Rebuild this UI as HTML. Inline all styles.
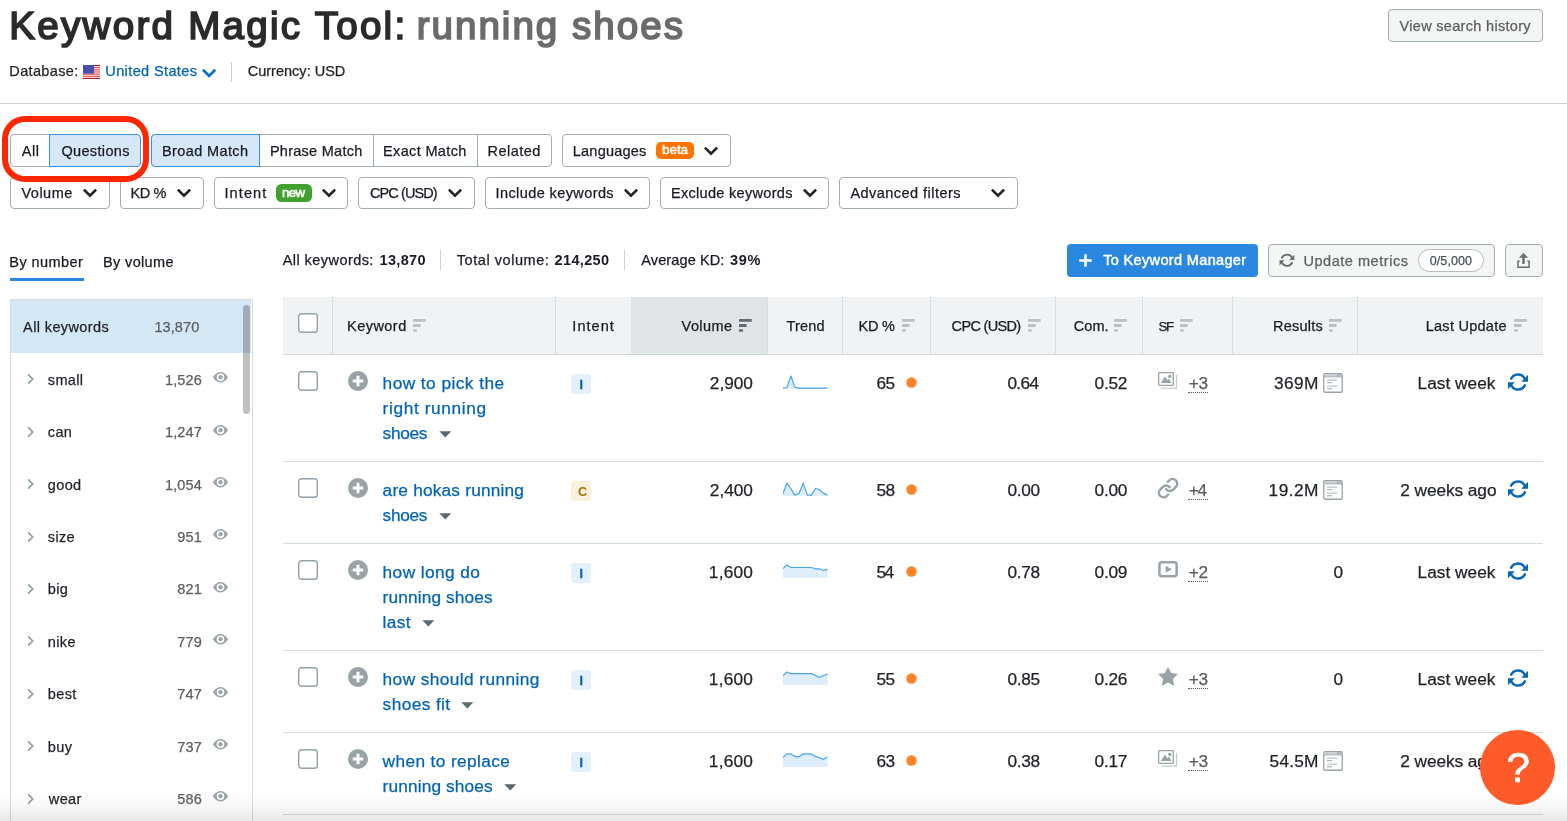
<!DOCTYPE html>
<html lang="en"><head><meta charset="utf-8"><title>Keyword Magic Tool: running shoes</title>
<style>
html,body{margin:0;padding:0;background:#fff;}
body{width:1567px;height:821px;overflow:hidden;position:relative;font-family:"Liberation Sans", sans-serif;}
.page{position:absolute;left:0;top:0;width:1567px;height:821px;overflow:hidden;will-change:transform;}
.b{position:absolute;box-sizing:border-box;display:block;}
.t{position:absolute;white-space:nowrap;line-height:20px;font-family:"Liberation Sans", sans-serif;}
</style></head><body>
<div class="page">
<div class="b" style="left:1388px;top:9px;width:155px;height:33px;background:#f4f5f5;border:1px solid #a1adb1;border-radius:4px;"></div>
<div class="b" style="left:231px;top:62px;width:1px;height:20px;background:#c9cdd0;"></div>
<svg class="b" style="left:83px;top:65px;" width="17" height="14" viewBox="0 0 17 14"><rect width="17" height="14" fill="#fbeaea"/><rect y="0.00" width="17" height="1.08" fill="#b01a1a"/><rect y="2.15" width="17" height="1.08" fill="#e0474d"/><rect y="4.31" width="17" height="1.08" fill="#e0474d"/><rect y="6.46" width="17" height="1.08" fill="#e0474d"/><rect y="8.62" width="17" height="1.08" fill="#e0474d"/><rect y="10.77" width="17" height="1.08" fill="#e0474d"/><rect y="12.92" width="17" height="1.08" fill="#b01a1a"/><rect width="11" height="8.7" fill="#4b50ae"/></svg>
<svg class="b" style="left:201px;top:66px;" width="17" height="13" viewBox="0 0 17 13"><path d="M1.95 3.75 L8.1 9.9 L14.25 3.75" fill="none" stroke="#0a6cc4" stroke-width="2.7" stroke-linecap="butt" stroke-linejoin="miter"/></svg>
<div class="b" style="left:0px;top:102.5px;width:1567px;height:1.0px;background:#cfd3d6;"></div>
<div class="b" style="left:10px;top:134px;width:40px;height:33px;background:#fff;border:1px solid #a1adb1;border-radius:4px 0 0 4px;"></div>
<div class="b" style="left:49px;top:134px;width:92px;height:33px;background:#d5e7f8;border:1px solid #3b8fe0;border-radius:0 4px 4px 0;"></div>
<div class="b" style="left:151px;top:134px;width:401px;height:33px;background:#fff;border:1px solid #a1adb1;border-radius:4px;"></div>
<div class="b" style="left:151px;top:134px;width:109px;height:33px;background:#d5e7f8;border:1px solid #3b8fe0;border-radius:4px 0 0 4px;"></div>
<div class="b" style="left:373px;top:135px;width:1px;height:31px;background:#a1adb1;"></div>
<div class="b" style="left:477px;top:135px;width:1px;height:31px;background:#a1adb1;"></div>
<div class="b" style="left:562px;top:134px;width:169px;height:33px;background:#fff;border:1px solid #a1adb1;border-radius:4px;"></div>
<div class="b" style="left:656px;top:142px;width:38px;height:17px;background:#ff7400;border-radius:5px;"></div>
<svg class="b" style="left:703.05px;top:145.1px;" width="16" height="12" viewBox="0 0 16 12"><path d="M1.9 2.6 L8 8.7 L14.1 2.6" fill="none" stroke="#222427" stroke-width="2.7" stroke-linecap="butt" stroke-linejoin="miter"/></svg>
<div class="b" style="left:10px;top:177px;width:100px;height:32px;background:#fff;border:1px solid #a1adb1;border-radius:4px;"></div>
<svg class="b" style="left:82.05px;top:187px;" width="16" height="12" viewBox="0 0 16 12"><path d="M1.9 2.6 L8 8.7 L14.1 2.6" fill="none" stroke="#222427" stroke-width="2.7" stroke-linecap="butt" stroke-linejoin="miter"/></svg>
<div class="b" style="left:120px;top:177px;width:84px;height:32px;background:#fff;border:1px solid #a1adb1;border-radius:4px;"></div>
<svg class="b" style="left:176.05px;top:187px;" width="16" height="12" viewBox="0 0 16 12"><path d="M1.9 2.6 L8 8.7 L14.1 2.6" fill="none" stroke="#222427" stroke-width="2.7" stroke-linecap="butt" stroke-linejoin="miter"/></svg>
<div class="b" style="left:214px;top:177px;width:134px;height:32px;background:#fff;border:1px solid #a1adb1;border-radius:4px;"></div>
<svg class="b" style="left:321.05px;top:187px;" width="16" height="12" viewBox="0 0 16 12"><path d="M1.9 2.6 L8 8.7 L14.1 2.6" fill="none" stroke="#222427" stroke-width="2.7" stroke-linecap="butt" stroke-linejoin="miter"/></svg>
<div class="b" style="left:358px;top:177px;width:117px;height:32px;background:#fff;border:1px solid #a1adb1;border-radius:4px;"></div>
<svg class="b" style="left:447.35px;top:187px;" width="16" height="12" viewBox="0 0 16 12"><path d="M1.9 2.6 L8 8.7 L14.1 2.6" fill="none" stroke="#222427" stroke-width="2.7" stroke-linecap="butt" stroke-linejoin="miter"/></svg>
<div class="b" style="left:485px;top:177px;width:165px;height:32px;background:#fff;border:1px solid #a1adb1;border-radius:4px;"></div>
<svg class="b" style="left:623.05px;top:187px;" width="16" height="12" viewBox="0 0 16 12"><path d="M1.9 2.6 L8 8.7 L14.1 2.6" fill="none" stroke="#222427" stroke-width="2.7" stroke-linecap="butt" stroke-linejoin="miter"/></svg>
<div class="b" style="left:660px;top:177px;width:169px;height:32px;background:#fff;border:1px solid #a1adb1;border-radius:4px;"></div>
<svg class="b" style="left:802.25px;top:187px;" width="16" height="12" viewBox="0 0 16 12"><path d="M1.9 2.6 L8 8.7 L14.1 2.6" fill="none" stroke="#222427" stroke-width="2.7" stroke-linecap="butt" stroke-linejoin="miter"/></svg>
<div class="b" style="left:839px;top:177px;width:179px;height:32px;background:#fff;border:1px solid #a1adb1;border-radius:4px;"></div>
<svg class="b" style="left:990.25px;top:187px;" width="16" height="12" viewBox="0 0 16 12"><path d="M1.9 2.6 L8 8.7 L14.1 2.6" fill="none" stroke="#222427" stroke-width="2.7" stroke-linecap="butt" stroke-linejoin="miter"/></svg>
<div class="b" style="left:276px;top:184px;width:36px;height:18px;background:#42a12e;border-radius:5.5px;"></div>
<div class="b" style="left:10px;top:278px;width:73.5px;height:2.6000000000000227px;background:#2a87e0;"></div>
<div class="b" style="left:440.2px;top:250px;width:1.0px;height:20px;background:#cfd3d6;"></div>
<div class="b" style="left:623.8px;top:250px;width:1.0px;height:20px;background:#cfd3d6;"></div>
<div class="b" style="left:1067px;top:244px;width:191px;height:33px;background:#2a87e0;border-radius:4px;"></div>
<svg class="b" style="left:1079px;top:253.5px;" width="13" height="13" viewBox="0 0 13 13"><path d="M6.5 0.3 V12.7 M0.3 6.5 H12.7" stroke="#fff" stroke-width="2.6" stroke-linecap="butt"/></svg>
<div class="b" style="left:1268px;top:244px;width:227px;height:33px;background:#f4f5f5;border:1px solid #a1adb1;border-radius:4px;"></div>
<div class="b" style="left:1418px;top:249px;width:66px;height:23px;background:#fff;border:1px solid #b4bdc0;border-radius:12px;"></div>
<div class="b" style="left:1505px;top:244px;width:38px;height:33px;background:#f4f5f5;border:1px solid #a1adb1;border-radius:4px;"></div>
<svg class="b" style="left:1277.56px;top:252.2px;" width="17.88" height="16.39" viewBox="-12 -11 24 22"><g><path d="M-6.8,-3.4 A7.6,7.6 0 0 1 6.5,-3.9" fill="none" stroke="#696c6e" stroke-width="2.45" stroke-linecap="round"/><path d="M10,-7.3 V-0.2 H3.2 Z" fill="#696c6e"/><g transform="rotate(180)"><path d="M-6.8,-3.4 A7.6,7.6 0 0 1 6.5,-3.9" fill="none" stroke="#696c6e" stroke-width="2.45" stroke-linecap="round"/><path d="M10,-7.3 V-0.2 H3.2 Z" fill="#696c6e"/></g></g></svg>
<svg class="b" style="left:1515px;top:251px;" width="17" height="19" viewBox="0 0 17 19"><path d="M8.5 1.9 L13.1 6.8 H9.7 V12.9 H7.3 V6.8 H3.9 Z" fill="#6b6d6e"/>
<path d="M4.6 10.2 H2.95 V16.15 H14.05 V10.2 H12.4" fill="none" stroke="#6b6d6e" stroke-width="1.5"/></svg>
<div class="b" style="left:10px;top:299px;width:243px;height:531px;background:#fff;border:1px solid #d3dee1;"></div>
<div class="b" style="left:11px;top:300px;width:240px;height:52.5px;background:#d4e7f7;"></div>
<div class="b" style="left:243px;top:305px;width:7px;height:109px;background:rgba(0,0,0,0.25);border-radius:3.5px;"></div>
<svg class="b" style="left:27px;top:373.4px;" width="8" height="12" viewBox="0 0 8 12"><path d="M1.1 1.3 L5.7 6 L1.1 10.7" fill="none" stroke="#909da1" stroke-width="1.7" stroke-linecap="butt" stroke-linejoin="miter"/></svg>
<svg class="b" style="left:212px;top:371.15px;" width="17" height="12.5" viewBox="0 0 17 12.5"><path d="M0.9 6.25 C3.4 2.4 5.9 1 8.5 1 C11.1 1 13.6 2.4 16.1 6.25 C13.6 10.1 11.1 11.5 8.5 11.5 C5.9 11.5 3.4 10.1 0.9 6.25 Z" fill="#9aa5a8"/><circle cx="8.5" cy="6.25" r="3.75" fill="#fff"/><circle cx="8.5" cy="6.25" r="2.15" fill="#9aa5a8"/></svg>
<svg class="b" style="left:27px;top:425.8px;" width="8" height="12" viewBox="0 0 8 12"><path d="M1.1 1.3 L5.7 6 L1.1 10.7" fill="none" stroke="#909da1" stroke-width="1.7" stroke-linecap="butt" stroke-linejoin="miter"/></svg>
<svg class="b" style="left:212px;top:423.55px;" width="17" height="12.5" viewBox="0 0 17 12.5"><path d="M0.9 6.25 C3.4 2.4 5.9 1 8.5 1 C11.1 1 13.6 2.4 16.1 6.25 C13.6 10.1 11.1 11.5 8.5 11.5 C5.9 11.5 3.4 10.1 0.9 6.25 Z" fill="#9aa5a8"/><circle cx="8.5" cy="6.25" r="3.75" fill="#fff"/><circle cx="8.5" cy="6.25" r="2.15" fill="#9aa5a8"/></svg>
<svg class="b" style="left:27px;top:478.2px;" width="8" height="12" viewBox="0 0 8 12"><path d="M1.1 1.3 L5.7 6 L1.1 10.7" fill="none" stroke="#909da1" stroke-width="1.7" stroke-linecap="butt" stroke-linejoin="miter"/></svg>
<svg class="b" style="left:212px;top:475.95px;" width="17" height="12.5" viewBox="0 0 17 12.5"><path d="M0.9 6.25 C3.4 2.4 5.9 1 8.5 1 C11.1 1 13.6 2.4 16.1 6.25 C13.6 10.1 11.1 11.5 8.5 11.5 C5.9 11.5 3.4 10.1 0.9 6.25 Z" fill="#9aa5a8"/><circle cx="8.5" cy="6.25" r="3.75" fill="#fff"/><circle cx="8.5" cy="6.25" r="2.15" fill="#9aa5a8"/></svg>
<svg class="b" style="left:27px;top:530.6px;" width="8" height="12" viewBox="0 0 8 12"><path d="M1.1 1.3 L5.7 6 L1.1 10.7" fill="none" stroke="#909da1" stroke-width="1.7" stroke-linecap="butt" stroke-linejoin="miter"/></svg>
<svg class="b" style="left:212px;top:528.35px;" width="17" height="12.5" viewBox="0 0 17 12.5"><path d="M0.9 6.25 C3.4 2.4 5.9 1 8.5 1 C11.1 1 13.6 2.4 16.1 6.25 C13.6 10.1 11.1 11.5 8.5 11.5 C5.9 11.5 3.4 10.1 0.9 6.25 Z" fill="#9aa5a8"/><circle cx="8.5" cy="6.25" r="3.75" fill="#fff"/><circle cx="8.5" cy="6.25" r="2.15" fill="#9aa5a8"/></svg>
<svg class="b" style="left:27px;top:583.0px;" width="8" height="12" viewBox="0 0 8 12"><path d="M1.1 1.3 L5.7 6 L1.1 10.7" fill="none" stroke="#909da1" stroke-width="1.7" stroke-linecap="butt" stroke-linejoin="miter"/></svg>
<svg class="b" style="left:212px;top:580.75px;" width="17" height="12.5" viewBox="0 0 17 12.5"><path d="M0.9 6.25 C3.4 2.4 5.9 1 8.5 1 C11.1 1 13.6 2.4 16.1 6.25 C13.6 10.1 11.1 11.5 8.5 11.5 C5.9 11.5 3.4 10.1 0.9 6.25 Z" fill="#9aa5a8"/><circle cx="8.5" cy="6.25" r="3.75" fill="#fff"/><circle cx="8.5" cy="6.25" r="2.15" fill="#9aa5a8"/></svg>
<svg class="b" style="left:27px;top:635.4px;" width="8" height="12" viewBox="0 0 8 12"><path d="M1.1 1.3 L5.7 6 L1.1 10.7" fill="none" stroke="#909da1" stroke-width="1.7" stroke-linecap="butt" stroke-linejoin="miter"/></svg>
<svg class="b" style="left:212px;top:633.15px;" width="17" height="12.5" viewBox="0 0 17 12.5"><path d="M0.9 6.25 C3.4 2.4 5.9 1 8.5 1 C11.1 1 13.6 2.4 16.1 6.25 C13.6 10.1 11.1 11.5 8.5 11.5 C5.9 11.5 3.4 10.1 0.9 6.25 Z" fill="#9aa5a8"/><circle cx="8.5" cy="6.25" r="3.75" fill="#fff"/><circle cx="8.5" cy="6.25" r="2.15" fill="#9aa5a8"/></svg>
<svg class="b" style="left:27px;top:687.8px;" width="8" height="12" viewBox="0 0 8 12"><path d="M1.1 1.3 L5.7 6 L1.1 10.7" fill="none" stroke="#909da1" stroke-width="1.7" stroke-linecap="butt" stroke-linejoin="miter"/></svg>
<svg class="b" style="left:212px;top:685.55px;" width="17" height="12.5" viewBox="0 0 17 12.5"><path d="M0.9 6.25 C3.4 2.4 5.9 1 8.5 1 C11.1 1 13.6 2.4 16.1 6.25 C13.6 10.1 11.1 11.5 8.5 11.5 C5.9 11.5 3.4 10.1 0.9 6.25 Z" fill="#9aa5a8"/><circle cx="8.5" cy="6.25" r="3.75" fill="#fff"/><circle cx="8.5" cy="6.25" r="2.15" fill="#9aa5a8"/></svg>
<svg class="b" style="left:27px;top:740.2px;" width="8" height="12" viewBox="0 0 8 12"><path d="M1.1 1.3 L5.7 6 L1.1 10.7" fill="none" stroke="#909da1" stroke-width="1.7" stroke-linecap="butt" stroke-linejoin="miter"/></svg>
<svg class="b" style="left:212px;top:737.95px;" width="17" height="12.5" viewBox="0 0 17 12.5"><path d="M0.9 6.25 C3.4 2.4 5.9 1 8.5 1 C11.1 1 13.6 2.4 16.1 6.25 C13.6 10.1 11.1 11.5 8.5 11.5 C5.9 11.5 3.4 10.1 0.9 6.25 Z" fill="#9aa5a8"/><circle cx="8.5" cy="6.25" r="3.75" fill="#fff"/><circle cx="8.5" cy="6.25" r="2.15" fill="#9aa5a8"/></svg>
<svg class="b" style="left:27px;top:792.6px;" width="8" height="12" viewBox="0 0 8 12"><path d="M1.1 1.3 L5.7 6 L1.1 10.7" fill="none" stroke="#909da1" stroke-width="1.7" stroke-linecap="butt" stroke-linejoin="miter"/></svg>
<svg class="b" style="left:212px;top:790.35px;" width="17" height="12.5" viewBox="0 0 17 12.5"><path d="M0.9 6.25 C3.4 2.4 5.9 1 8.5 1 C11.1 1 13.6 2.4 16.1 6.25 C13.6 10.1 11.1 11.5 8.5 11.5 C5.9 11.5 3.4 10.1 0.9 6.25 Z" fill="#9aa5a8"/><circle cx="8.5" cy="6.25" r="3.75" fill="#fff"/><circle cx="8.5" cy="6.25" r="2.15" fill="#9aa5a8"/></svg>
<div class="b" style="left:283px;top:297px;width:1260px;height:57px;background:#f0f2f3;"></div>
<div class="b" style="left:631px;top:297px;width:136.5px;height:57px;background:#e0e4e7;"></div>
<div class="b" style="left:283px;top:354px;width:1260px;height:1px;background:#cfd9dc;"></div>
<div class="b" style="left:332px;top:297px;width:1px;height:56.5px;background:#d9dee0;"></div>
<div class="b" style="left:555px;top:297px;width:1px;height:56.5px;background:#d9dee0;"></div>
<div class="b" style="left:767px;top:297px;width:1px;height:56.5px;background:#d9dee0;"></div>
<div class="b" style="left:842px;top:297px;width:1px;height:56.5px;background:#d9dee0;"></div>
<div class="b" style="left:930px;top:297px;width:1px;height:56.5px;background:#d9dee0;"></div>
<div class="b" style="left:1055px;top:297px;width:1px;height:56.5px;background:#d9dee0;"></div>
<div class="b" style="left:1142px;top:297px;width:1px;height:56.5px;background:#d9dee0;"></div>
<div class="b" style="left:1232px;top:297px;width:1px;height:56.5px;background:#d9dee0;"></div>
<div class="b" style="left:1357px;top:297px;width:1px;height:56.5px;background:#d9dee0;"></div>
<svg class="b" style="left:298px;top:313px;" width="20" height="20" viewBox="0 0 20 20"><rect x="0.7" y="0.7" width="18.6" height="18.6" rx="2.8" fill="#fff" stroke="#94a2a7" stroke-width="1.4"/></svg>
<svg class="b" style="left:412.5px;top:319px;" width="14" height="13" viewBox="0 0 14 13"><rect x="0" y="0.1" width="12.8" height="2.7" rx="0.5" fill="#b9c1c4"/><rect x="0" y="5.1" width="7.6" height="2.8" rx="0.5" fill="#b9c1c4"/><rect x="0" y="10.2" width="3.9" height="2.6" rx="0.5" fill="#b9c1c4"/></svg>
<svg class="b" style="left:738.7px;top:319px;" width="14" height="13" viewBox="0 0 14 13"><rect x="0" y="0.1" width="12.8" height="2.7" rx="0.5" fill="#5e6e74"/><rect x="0" y="5.1" width="7.6" height="2.8" rx="0.5" fill="#5e6e74"/><rect x="0" y="10.2" width="3.9" height="2.6" rx="0.5" fill="#5e6e74"/></svg>
<svg class="b" style="left:901.7px;top:319px;" width="14" height="13" viewBox="0 0 14 13"><rect x="0" y="0.1" width="12.8" height="2.7" rx="0.5" fill="#b9c1c4"/><rect x="0" y="5.1" width="7.6" height="2.8" rx="0.5" fill="#b9c1c4"/><rect x="0" y="10.2" width="3.9" height="2.6" rx="0.5" fill="#b9c1c4"/></svg>
<svg class="b" style="left:1027.7px;top:319px;" width="14" height="13" viewBox="0 0 14 13"><rect x="0" y="0.1" width="12.8" height="2.7" rx="0.5" fill="#b9c1c4"/><rect x="0" y="5.1" width="7.6" height="2.8" rx="0.5" fill="#b9c1c4"/><rect x="0" y="10.2" width="3.9" height="2.6" rx="0.5" fill="#b9c1c4"/></svg>
<svg class="b" style="left:1114px;top:319px;" width="14" height="13" viewBox="0 0 14 13"><rect x="0" y="0.1" width="12.8" height="2.7" rx="0.5" fill="#b9c1c4"/><rect x="0" y="5.1" width="7.6" height="2.8" rx="0.5" fill="#b9c1c4"/><rect x="0" y="10.2" width="3.9" height="2.6" rx="0.5" fill="#b9c1c4"/></svg>
<svg class="b" style="left:1180.2px;top:319px;" width="14" height="13" viewBox="0 0 14 13"><rect x="0" y="0.1" width="12.8" height="2.7" rx="0.5" fill="#b9c1c4"/><rect x="0" y="5.1" width="7.6" height="2.8" rx="0.5" fill="#b9c1c4"/><rect x="0" y="10.2" width="3.9" height="2.6" rx="0.5" fill="#b9c1c4"/></svg>
<svg class="b" style="left:1329px;top:319px;" width="14" height="13" viewBox="0 0 14 13"><rect x="0" y="0.1" width="12.8" height="2.7" rx="0.5" fill="#b9c1c4"/><rect x="0" y="5.1" width="7.6" height="2.8" rx="0.5" fill="#b9c1c4"/><rect x="0" y="10.2" width="3.9" height="2.6" rx="0.5" fill="#b9c1c4"/></svg>
<svg class="b" style="left:1513.9px;top:319px;" width="14" height="13" viewBox="0 0 14 13"><rect x="0" y="0.1" width="12.8" height="2.7" rx="0.5" fill="#b9c1c4"/><rect x="0" y="5.1" width="7.6" height="2.8" rx="0.5" fill="#b9c1c4"/><rect x="0" y="10.2" width="3.9" height="2.6" rx="0.5" fill="#b9c1c4"/></svg>
<div class="b" style="left:283px;top:460.7px;width:1260px;height:1.1999999999999886px;background:#d3dee1;"></div>
<svg class="b" style="left:298px;top:371px;" width="20" height="20" viewBox="0 0 20 20"><rect x="0.7" y="0.7" width="18.6" height="18.6" rx="2.8" fill="#fff" stroke="#94a2a7" stroke-width="1.4"/></svg>
<svg class="b" style="left:348px;top:371px;" width="20" height="20" viewBox="0 0 20 20"><circle cx="10" cy="10" r="10" fill="#98a3a6"/><path d="M10 4.8 V15.2 M4.8 10 H15.2" stroke="#fff" stroke-width="2.9" stroke-linecap="butt"/></svg>
<svg class="b" style="left:438.6px;top:430.8px;" width="13" height="7" viewBox="0 0 13 7"><path d="M0.3 0.2 H12.3 L6.3 6.6 Z" fill="#5b6a70"/></svg>
<div class="b" style="left:571px;top:374px;width:20px;height:20px;background:#e3f1fd;border-radius:3.5px;"></div>
<svg class="b" style="left:783.3px;top:374px;" width="46" height="16" viewBox="0 0 46 16"><polygon points="0,14.7 0,14.1 3.9,13.6 7.9,2.05 11.9,13.35 16,14.1 20.2,14.1 24.4,14.1 28.3,14.1 32.4,14.1 36.3,14.1 40.4,14.1 44.6,14.1 44.6,14.7" fill="#dcedfb"/><polyline points="0,14.1 3.9,13.6 7.9,2.05 11.9,13.35 16,14.1 20.2,14.1 24.4,14.1 28.3,14.1 32.4,14.1 36.3,14.1 40.4,14.1 44.6,14.1" fill="none" stroke="#47a4f0" stroke-width="1.2" stroke-linejoin="round"/></svg>
<svg class="b" style="left:905.5px;top:377px;" width="11" height="11" viewBox="0 0 11 11"><circle cx="5.5" cy="5.5" r="5.2" fill="#ff8427"/></svg>
<svg class="b" style="left:1157px;top:371px;" width="21" height="19" viewBox="0 0 21 19"><path d="M3.8 17.1 H19.5 V3.8" fill="none" stroke="#c6cdd0" stroke-width="1.3"/>
<rect x="1.65" y="1.65" width="14.7" height="12.7" rx="0.8" fill="#fff" stroke="#98a3a7" stroke-width="1.3"/>
<path d="M3.8 12 L8 5.6 L10.4 9.2 L12.1 7.6 L14.4 12 Z" fill="#98a3a7"/><circle cx="12.8" cy="5.4" r="1.7" fill="#98a3a7"/></svg>
<div class="b" style="left:1188px;top:392px;width:20px;height:0;border-top:1px dotted #555;"></div>
<svg class="b" style="left:1322.6px;top:372.6px;" width="21" height="21" viewBox="0 0 21 21"><rect x="0.75" y="0.75" width="18.5" height="18.5" rx="1.3" fill="#fff" stroke="#98a2a6" stroke-width="1.3"/>
<rect x="1.4" y="1.4" width="17.2" height="2.2" fill="#c9d0d2"/><path d="M1 3.9 H19" stroke="#98a2a6" stroke-width="0.9"/>
<rect x="14.3" y="1.3" width="1.2" height="2" fill="#98a2a6"/><rect x="16.6" y="1.3" width="1.2" height="2" fill="#98a2a6"/>
<rect x="4" y="6.3" width="10.2" height="1.7" fill="#c9d0d2"/><rect x="4" y="9.2" width="5" height="1" fill="#98a2a6"/>
<rect x="4" y="12.4" width="10.2" height="1.7" fill="#c9d0d2"/><rect x="4" y="15.3" width="5" height="1" fill="#98a2a6"/></svg>
<svg class="b" style="left:1506.0px;top:371.0px;" width="24.0" height="22.0" viewBox="-12 -11 24 22"><g><path d="M-6.8,-3.4 A7.6,7.6 0 0 1 6.5,-3.9" fill="none" stroke="#0866bd" stroke-width="2.45" stroke-linecap="round"/><path d="M10,-7.3 V-0.2 H3.2 Z" fill="#0866bd"/><g transform="rotate(180)"><path d="M-6.8,-3.4 A7.6,7.6 0 0 1 6.5,-3.9" fill="none" stroke="#0866bd" stroke-width="2.45" stroke-linecap="round"/><path d="M10,-7.3 V-0.2 H3.2 Z" fill="#0866bd"/></g></g></svg>
<div class="b" style="left:283px;top:542.7px;width:1260px;height:1.1999999999999318px;background:#d3dee1;"></div>
<svg class="b" style="left:298px;top:478px;" width="20" height="20" viewBox="0 0 20 20"><rect x="0.7" y="0.7" width="18.6" height="18.6" rx="2.8" fill="#fff" stroke="#94a2a7" stroke-width="1.4"/></svg>
<svg class="b" style="left:348px;top:478px;" width="20" height="20" viewBox="0 0 20 20"><circle cx="10" cy="10" r="10" fill="#98a3a6"/><path d="M10 4.8 V15.2 M4.8 10 H15.2" stroke="#fff" stroke-width="2.9" stroke-linecap="butt"/></svg>
<svg class="b" style="left:438.6px;top:512.8px;" width="13" height="7" viewBox="0 0 13 7"><path d="M0.3 0.2 H12.3 L6.3 6.6 Z" fill="#5b6a70"/></svg>
<div class="b" style="left:571px;top:481px;width:20px;height:20px;background:#faf0dc;border-radius:3.5px;"></div>
<svg class="b" style="left:783.3px;top:481px;" width="46" height="16" viewBox="0 0 46 16"><polygon points="0,14.7 0,12.9 3.9,1.9 7.9,7.75 11.9,14.1 16,12.4 20.2,2.15 24.4,14.1 28.3,14.1 32.4,7.5 36.3,8.5 40.4,12.1 44.6,14.1 44.6,14.7" fill="#dcedfb"/><polyline points="0,12.9 3.9,1.9 7.9,7.75 11.9,14.1 16,12.4 20.2,2.15 24.4,14.1 28.3,14.1 32.4,7.5 36.3,8.5 40.4,12.1 44.6,14.1" fill="none" stroke="#47a4f0" stroke-width="1.2" stroke-linejoin="round"/></svg>
<svg class="b" style="left:905.5px;top:484px;" width="11" height="11" viewBox="0 0 11 11"><circle cx="5.5" cy="5.5" r="5.2" fill="#ff8427"/></svg>
<svg class="b" style="left:1156px;top:475.7px;" width="24" height="24" viewBox="0 0 24 24"><g fill="none" stroke="#98a3a7" stroke-width="2.7" stroke-linecap="round" stroke-linejoin="round" transform="translate(12,12.2) scale(0.92) translate(-12,-12)">
<path d="M10 13a5 5 0 0 0 7.54.54l3-3a5 5 0 0 0-7.07-7.07l-1.72 1.71"/><path d="M14 11a5 5 0 0 0-7.54-.54l-3 3a5 5 0 0 0 7.07 7.07l1.71-1.71"/></g></svg>
<div class="b" style="left:1188px;top:499px;width:20px;height:0;border-top:1px dotted #555;"></div>
<svg class="b" style="left:1322.6px;top:479.6px;" width="21" height="21" viewBox="0 0 21 21"><rect x="0.75" y="0.75" width="18.5" height="18.5" rx="1.3" fill="#fff" stroke="#98a2a6" stroke-width="1.3"/>
<rect x="1.4" y="1.4" width="17.2" height="2.2" fill="#c9d0d2"/><path d="M1 3.9 H19" stroke="#98a2a6" stroke-width="0.9"/>
<rect x="14.3" y="1.3" width="1.2" height="2" fill="#98a2a6"/><rect x="16.6" y="1.3" width="1.2" height="2" fill="#98a2a6"/>
<rect x="4" y="6.3" width="10.2" height="1.7" fill="#c9d0d2"/><rect x="4" y="9.2" width="5" height="1" fill="#98a2a6"/>
<rect x="4" y="12.4" width="10.2" height="1.7" fill="#c9d0d2"/><rect x="4" y="15.3" width="5" height="1" fill="#98a2a6"/></svg>
<svg class="b" style="left:1506.0px;top:478.0px;" width="24.0" height="22.0" viewBox="-12 -11 24 22"><g><path d="M-6.8,-3.4 A7.6,7.6 0 0 1 6.5,-3.9" fill="none" stroke="#0866bd" stroke-width="2.45" stroke-linecap="round"/><path d="M10,-7.3 V-0.2 H3.2 Z" fill="#0866bd"/><g transform="rotate(180)"><path d="M-6.8,-3.4 A7.6,7.6 0 0 1 6.5,-3.9" fill="none" stroke="#0866bd" stroke-width="2.45" stroke-linecap="round"/><path d="M10,-7.3 V-0.2 H3.2 Z" fill="#0866bd"/></g></g></svg>
<div class="b" style="left:283px;top:649.7px;width:1260px;height:1.1999999999999318px;background:#d3dee1;"></div>
<svg class="b" style="left:298px;top:560px;" width="20" height="20" viewBox="0 0 20 20"><rect x="0.7" y="0.7" width="18.6" height="18.6" rx="2.8" fill="#fff" stroke="#94a2a7" stroke-width="1.4"/></svg>
<svg class="b" style="left:348px;top:560px;" width="20" height="20" viewBox="0 0 20 20"><circle cx="10" cy="10" r="10" fill="#98a3a6"/><path d="M10 4.8 V15.2 M4.8 10 H15.2" stroke="#fff" stroke-width="2.9" stroke-linecap="butt"/></svg>
<svg class="b" style="left:421.6px;top:619.8px;" width="13" height="7" viewBox="0 0 13 7"><path d="M0.3 0.2 H12.3 L6.3 6.6 Z" fill="#5b6a70"/></svg>
<div class="b" style="left:571px;top:563px;width:20px;height:20px;background:#e3f1fd;border-radius:3.5px;"></div>
<svg class="b" style="left:783.3px;top:563px;" width="46" height="16" viewBox="0 0 46 16"><polygon points="0,14.7 0,5.55 3.9,2.05 7.9,4.5 11.9,4.5 16,4.5 20.2,4.5 24.4,4.5 28.3,4.5 32.4,5.8 36.3,5.8 40.4,7.5 44.6,6.15 44.6,14.7" fill="#dcedfb"/><polyline points="0,5.55 3.9,2.05 7.9,4.5 11.9,4.5 16,4.5 20.2,4.5 24.4,4.5 28.3,4.5 32.4,5.8 36.3,5.8 40.4,7.5 44.6,6.15" fill="none" stroke="#47a4f0" stroke-width="1.2" stroke-linejoin="round"/></svg>
<svg class="b" style="left:905.5px;top:566px;" width="11" height="11" viewBox="0 0 11 11"><circle cx="5.5" cy="5.5" r="5.2" fill="#ff8427"/></svg>
<svg class="b" style="left:1157px;top:560px;" width="22" height="19" viewBox="0 0 22 19"><rect x="2.45" y="2.35" width="17.2" height="13.9" rx="2.4" fill="#fff" stroke="#98a3a7" stroke-width="2.5"/><path d="M8.6 5.9 L15.1 9.3 L8.6 12.7 Z" fill="#98a3a7"/></svg>
<div class="b" style="left:1188px;top:581px;width:20px;height:0;border-top:1px dotted #555;"></div>
<svg class="b" style="left:1506.0px;top:560.0px;" width="24.0" height="22.0" viewBox="-12 -11 24 22"><g><path d="M-6.8,-3.4 A7.6,7.6 0 0 1 6.5,-3.9" fill="none" stroke="#0866bd" stroke-width="2.45" stroke-linecap="round"/><path d="M10,-7.3 V-0.2 H3.2 Z" fill="#0866bd"/><g transform="rotate(180)"><path d="M-6.8,-3.4 A7.6,7.6 0 0 1 6.5,-3.9" fill="none" stroke="#0866bd" stroke-width="2.45" stroke-linecap="round"/><path d="M10,-7.3 V-0.2 H3.2 Z" fill="#0866bd"/></g></g></svg>
<div class="b" style="left:283px;top:731.7px;width:1260px;height:1.1999999999999318px;background:#d3dee1;"></div>
<svg class="b" style="left:298px;top:667px;" width="20" height="20" viewBox="0 0 20 20"><rect x="0.7" y="0.7" width="18.6" height="18.6" rx="2.8" fill="#fff" stroke="#94a2a7" stroke-width="1.4"/></svg>
<svg class="b" style="left:348px;top:667px;" width="20" height="20" viewBox="0 0 20 20"><circle cx="10" cy="10" r="10" fill="#98a3a6"/><path d="M10 4.8 V15.2 M4.8 10 H15.2" stroke="#fff" stroke-width="2.9" stroke-linecap="butt"/></svg>
<svg class="b" style="left:461.1px;top:701.8px;" width="13" height="7" viewBox="0 0 13 7"><path d="M0.3 0.2 H12.3 L6.3 6.6 Z" fill="#5b6a70"/></svg>
<div class="b" style="left:571px;top:670px;width:20px;height:20px;background:#e3f1fd;border-radius:3.5px;"></div>
<svg class="b" style="left:783.3px;top:670px;" width="46" height="16" viewBox="0 0 46 16"><polygon points="0,14.7 0,5.55 3.9,2.05 7.9,3.6 11.9,3.6 16,3.6 20.2,3.6 24.4,3.6 28.3,3.6 32.4,5.55 36.3,7.5 40.4,5.55 44.6,4.1 44.6,14.7" fill="#dcedfb"/><polyline points="0,5.55 3.9,2.05 7.9,3.6 11.9,3.6 16,3.6 20.2,3.6 24.4,3.6 28.3,3.6 32.4,5.55 36.3,7.5 40.4,5.55 44.6,4.1" fill="none" stroke="#47a4f0" stroke-width="1.2" stroke-linejoin="round"/></svg>
<svg class="b" style="left:905.5px;top:673px;" width="11" height="11" viewBox="0 0 11 11"><circle cx="5.5" cy="5.5" r="5.2" fill="#ff8427"/></svg>
<svg class="b" style="left:1157px;top:666px;" width="22" height="21" viewBox="0 0 22 21"><path d="M11 1 L14.1 7 L20.9 8 L16 12.9 L17.2 19.8 L11 16.6 L4.8 19.8 L6 12.9 L1.1 8 L7.9 7 Z" fill="#98a3a7"/></svg>
<div class="b" style="left:1188px;top:688px;width:20px;height:0;border-top:1px dotted #555;"></div>
<svg class="b" style="left:1506.0px;top:667.0px;" width="24.0" height="22.0" viewBox="-12 -11 24 22"><g><path d="M-6.8,-3.4 A7.6,7.6 0 0 1 6.5,-3.9" fill="none" stroke="#0866bd" stroke-width="2.45" stroke-linecap="round"/><path d="M10,-7.3 V-0.2 H3.2 Z" fill="#0866bd"/><g transform="rotate(180)"><path d="M-6.8,-3.4 A7.6,7.6 0 0 1 6.5,-3.9" fill="none" stroke="#0866bd" stroke-width="2.45" stroke-linecap="round"/><path d="M10,-7.3 V-0.2 H3.2 Z" fill="#0866bd"/></g></g></svg>
<div class="b" style="left:283px;top:813.7px;width:1260px;height:1.1999999999999318px;background:#d3dee1;"></div>
<svg class="b" style="left:298px;top:749px;" width="20" height="20" viewBox="0 0 20 20"><rect x="0.7" y="0.7" width="18.6" height="18.6" rx="2.8" fill="#fff" stroke="#94a2a7" stroke-width="1.4"/></svg>
<svg class="b" style="left:348px;top:749px;" width="20" height="20" viewBox="0 0 20 20"><circle cx="10" cy="10" r="10" fill="#98a3a6"/><path d="M10 4.8 V15.2 M4.8 10 H15.2" stroke="#fff" stroke-width="2.9" stroke-linecap="butt"/></svg>
<svg class="b" style="left:503.8px;top:783.8px;" width="13" height="7" viewBox="0 0 13 7"><path d="M0.3 0.2 H12.3 L6.3 6.6 Z" fill="#5b6a70"/></svg>
<div class="b" style="left:571px;top:752px;width:20px;height:20px;background:#e3f1fd;border-radius:3.5px;"></div>
<svg class="b" style="left:783.3px;top:752px;" width="46" height="16" viewBox="0 0 46 16"><polygon points="0,14.7 0,5.55 3.9,1.9 7.9,1.9 11.9,4.6 16,4.6 20.2,1.9 24.4,1.9 28.3,1.9 32.4,4.6 36.3,5.55 40.4,7.4 44.6,4.8 44.6,14.7" fill="#dcedfb"/><polyline points="0,5.55 3.9,1.9 7.9,1.9 11.9,4.6 16,4.6 20.2,1.9 24.4,1.9 28.3,1.9 32.4,4.6 36.3,5.55 40.4,7.4 44.6,4.8" fill="none" stroke="#47a4f0" stroke-width="1.2" stroke-linejoin="round"/></svg>
<svg class="b" style="left:905.5px;top:755px;" width="11" height="11" viewBox="0 0 11 11"><circle cx="5.5" cy="5.5" r="5.2" fill="#ff8427"/></svg>
<svg class="b" style="left:1157px;top:749px;" width="21" height="19" viewBox="0 0 21 19"><path d="M3.8 17.1 H19.5 V3.8" fill="none" stroke="#c6cdd0" stroke-width="1.3"/>
<rect x="1.65" y="1.65" width="14.7" height="12.7" rx="0.8" fill="#fff" stroke="#98a3a7" stroke-width="1.3"/>
<path d="M3.8 12 L8 5.6 L10.4 9.2 L12.1 7.6 L14.4 12 Z" fill="#98a3a7"/><circle cx="12.8" cy="5.4" r="1.7" fill="#98a3a7"/></svg>
<div class="b" style="left:1188px;top:770px;width:20px;height:0;border-top:1px dotted #555;"></div>
<svg class="b" style="left:1322.6px;top:750.6px;" width="21" height="21" viewBox="0 0 21 21"><rect x="0.75" y="0.75" width="18.5" height="18.5" rx="1.3" fill="#fff" stroke="#98a2a6" stroke-width="1.3"/>
<rect x="1.4" y="1.4" width="17.2" height="2.2" fill="#c9d0d2"/><path d="M1 3.9 H19" stroke="#98a2a6" stroke-width="0.9"/>
<rect x="14.3" y="1.3" width="1.2" height="2" fill="#98a2a6"/><rect x="16.6" y="1.3" width="1.2" height="2" fill="#98a2a6"/>
<rect x="4" y="6.3" width="10.2" height="1.7" fill="#c9d0d2"/><rect x="4" y="9.2" width="5" height="1" fill="#98a2a6"/>
<rect x="4" y="12.4" width="10.2" height="1.7" fill="#c9d0d2"/><rect x="4" y="15.3" width="5" height="1" fill="#98a2a6"/></svg>
<svg class="b" style="left:1506.0px;top:749.0px;" width="24.0" height="22.0" viewBox="-12 -11 24 22"><g><path d="M-6.8,-3.4 A7.6,7.6 0 0 1 6.5,-3.9" fill="none" stroke="#0866bd" stroke-width="2.45" stroke-linecap="round"/><path d="M10,-7.3 V-0.2 H3.2 Z" fill="#0866bd"/><g transform="rotate(180)"><path d="M-6.8,-3.4 A7.6,7.6 0 0 1 6.5,-3.9" fill="none" stroke="#0866bd" stroke-width="2.45" stroke-linecap="round"/><path d="M10,-7.3 V-0.2 H3.2 Z" fill="#0866bd"/></g></g></svg>
<span class="t" style="left:9.35px;top:16.10px;font-size:38.6px;color:#2b2b2b;letter-spacing:2.255px;-webkit-text-stroke:1.7px #2b2b2b;">Keyword Magic Tool:</span>
<span class="t" style="left:416.65px;top:16.10px;font-size:38.6px;color:#6b6b6b;letter-spacing:1.994px;-webkit-text-stroke:1.7px #6b6b6b;">running shoes</span>
<span class="t" style="left:1399.53px;top:16.00px;font-size:14.5px;color:#5c5e60;letter-spacing:0.314px;-webkit-text-stroke:0.25px #5c5e60;">View search history</span>
<span class="t" style="left:9.32px;top:60.80px;font-size:14.5px;color:#1f2226;letter-spacing:0.347px;-webkit-text-stroke:0.25px #1f2226;">Database:</span>
<span class="t" style="left:105.33px;top:60.80px;font-size:14.5px;color:#0062b8;letter-spacing:0.379px;-webkit-text-stroke:0.25px #0062b8;">United States</span>
<span class="t" style="left:247.72px;top:60.80px;font-size:14.5px;color:#1f2226;letter-spacing:0.011px;-webkit-text-stroke:0.25px #1f2226;">Currency: USD</span>
<span class="t" style="left:21.82px;top:140.60px;font-size:14.5px;color:#191b23;letter-spacing:0.479px;-webkit-text-stroke:0.25px #191b23;">All</span>
<span class="t" style="left:61.42px;top:140.60px;font-size:14.5px;color:#191b23;letter-spacing:0.352px;-webkit-text-stroke:0.25px #191b23;">Questions</span>
<span class="t" style="left:162.03px;top:140.60px;font-size:14.5px;color:#191b23;letter-spacing:0.381px;-webkit-text-stroke:0.25px #191b23;">Broad Match</span>
<span class="t" style="left:269.93px;top:140.60px;font-size:14.5px;color:#191b23;letter-spacing:0.260px;-webkit-text-stroke:0.25px #191b23;">Phrase Match</span>
<span class="t" style="left:383.02px;top:140.60px;font-size:14.5px;color:#191b23;letter-spacing:0.354px;-webkit-text-stroke:0.25px #191b23;">Exact Match</span>
<span class="t" style="left:487.52px;top:140.60px;font-size:14.5px;color:#191b23;letter-spacing:0.456px;-webkit-text-stroke:0.25px #191b23;">Related</span>
<span class="t" style="left:572.83px;top:140.60px;font-size:14.5px;color:#191b23;letter-spacing:0.205px;-webkit-text-stroke:0.25px #191b23;">Languages</span>
<span class="t" style="left:662.05px;top:140.40px;font-size:13.6px;color:#fff;letter-spacing:-0.132px;-webkit-text-stroke:0.5px #fff;">beta</span>
<span class="t" style="left:21.43px;top:183.40px;font-size:14.5px;color:#191b23;letter-spacing:0.510px;-webkit-text-stroke:0.25px #191b23;">Volume</span>
<span class="t" style="left:130.53px;top:183.40px;font-size:14.5px;color:#191b23;letter-spacing:-0.374px;-webkit-text-stroke:0.25px #191b23;">KD %</span>
<span class="t" style="left:224.53px;top:183.40px;font-size:14.5px;color:#191b23;letter-spacing:1.080px;-webkit-text-stroke:0.25px #191b23;">Intent</span>
<span class="t" style="left:369.93px;top:183.40px;font-size:14.5px;color:#191b23;letter-spacing:-0.892px;-webkit-text-stroke:0.25px #191b23;">CPC (USD)</span>
<span class="t" style="left:495.52px;top:183.40px;font-size:14.5px;color:#191b23;letter-spacing:0.405px;-webkit-text-stroke:0.25px #191b23;">Include keywords</span>
<span class="t" style="left:670.92px;top:183.40px;font-size:14.5px;color:#191b23;letter-spacing:0.310px;-webkit-text-stroke:0.25px #191b23;">Exclude keywords</span>
<span class="t" style="left:850.42px;top:183.40px;font-size:14.5px;color:#191b23;letter-spacing:0.462px;-webkit-text-stroke:0.25px #191b23;">Advanced filters</span>
<span class="t" style="left:282.10px;top:182.60px;font-size:13.2px;color:#fff;letter-spacing:-0.584px;-webkit-text-stroke:0.6px #fff;">new</span>
<span class="t" style="left:9.32px;top:252.00px;font-size:14.5px;color:#191b23;letter-spacing:0.433px;-webkit-text-stroke:0.25px #191b23;">By number</span>
<span class="t" style="left:103.03px;top:252.00px;font-size:14.5px;color:#191b23;letter-spacing:0.353px;-webkit-text-stroke:0.25px #191b23;">By volume</span>
<span class="t" style="left:282.73px;top:249.80px;font-size:14.5px;color:#191b23;letter-spacing:0.439px;-webkit-text-stroke:0.25px #191b23;">All keywords:</span>
<span class="t" style="left:379.50px;top:249.80px;font-size:14.5px;color:#191b23;letter-spacing:0.343px;font-weight:700;">13,870</span>
<span class="t" style="left:456.82px;top:249.80px;font-size:14.5px;color:#191b23;letter-spacing:0.546px;-webkit-text-stroke:0.25px #191b23;">Total volume:</span>
<span class="t" style="left:554.60px;top:249.80px;font-size:14.5px;color:#191b23;letter-spacing:0.342px;font-weight:700;">214,250</span>
<span class="t" style="left:641.33px;top:249.80px;font-size:14.5px;color:#191b23;letter-spacing:0.103px;-webkit-text-stroke:0.25px #191b23;">Average KD:</span>
<span class="t" style="left:730.00px;top:249.80px;font-size:14.5px;color:#191b23;letter-spacing:0.686px;font-weight:700;">39%</span>
<span class="t" style="left:1103.22px;top:250.40px;font-size:14.5px;color:#fff;letter-spacing:0.345px;-webkit-text-stroke:0.45px #fff;">To Keyword Manager</span>
<span class="t" style="left:1303.53px;top:250.60px;font-size:14.5px;color:#5b5f61;letter-spacing:0.530px;-webkit-text-stroke:0.25px #5b5f61;">Update metrics</span>
<span class="t" style="left:1429.72px;top:251.00px;font-size:12.5px;color:#4a5256;letter-spacing:0.099px;-webkit-text-stroke:0.25px #4a5256;">0/5,000</span>
<span class="t" style="left:23.12px;top:317.10px;font-size:14.5px;color:#1f2226;letter-spacing:0.383px;-webkit-text-stroke:0.25px #1f2226;">All keywords</span>
<span class="t" style="left:154.43px;top:317.10px;font-size:14.5px;color:#5b5f61;letter-spacing:0.093px;-webkit-text-stroke:0.25px #5b5f61;">13,870</span>
<span class="t" style="left:47.83px;top:369.70px;font-size:14.5px;color:#1f2226;letter-spacing:0.350px;-webkit-text-stroke:0.25px #1f2226;">small</span>
<span class="t" style="left:164.97px;top:369.70px;font-size:14.5px;color:#5b5f61;letter-spacing:0.120px;-webkit-text-stroke:0.25px #5b5f61;">1,526</span>
<span class="t" style="left:47.83px;top:422.10px;font-size:14.5px;color:#1f2226;letter-spacing:0.350px;-webkit-text-stroke:0.25px #1f2226;">can</span>
<span class="t" style="left:164.97px;top:422.10px;font-size:14.5px;color:#5b5f61;letter-spacing:0.120px;-webkit-text-stroke:0.25px #5b5f61;">1,247</span>
<span class="t" style="left:47.83px;top:474.50px;font-size:14.5px;color:#1f2226;letter-spacing:0.350px;-webkit-text-stroke:0.25px #1f2226;">good</span>
<span class="t" style="left:164.97px;top:474.50px;font-size:14.5px;color:#5b5f61;letter-spacing:0.120px;-webkit-text-stroke:0.25px #5b5f61;">1,054</span>
<span class="t" style="left:47.83px;top:526.90px;font-size:14.5px;color:#1f2226;letter-spacing:0.350px;-webkit-text-stroke:0.25px #1f2226;">size</span>
<span class="t" style="left:177.31px;top:526.90px;font-size:14.5px;color:#5b5f61;letter-spacing:0.120px;-webkit-text-stroke:0.25px #5b5f61;">951</span>
<span class="t" style="left:47.83px;top:579.30px;font-size:14.5px;color:#1f2226;letter-spacing:0.350px;-webkit-text-stroke:0.25px #1f2226;">big</span>
<span class="t" style="left:177.31px;top:579.30px;font-size:14.5px;color:#5b5f61;letter-spacing:0.120px;-webkit-text-stroke:0.25px #5b5f61;">821</span>
<span class="t" style="left:47.83px;top:631.70px;font-size:14.5px;color:#1f2226;letter-spacing:0.350px;-webkit-text-stroke:0.25px #1f2226;">nike</span>
<span class="t" style="left:177.31px;top:631.70px;font-size:14.5px;color:#5b5f61;letter-spacing:0.120px;-webkit-text-stroke:0.25px #5b5f61;">779</span>
<span class="t" style="left:47.83px;top:684.10px;font-size:14.5px;color:#1f2226;letter-spacing:0.350px;-webkit-text-stroke:0.25px #1f2226;">best</span>
<span class="t" style="left:177.31px;top:684.10px;font-size:14.5px;color:#5b5f61;letter-spacing:0.120px;-webkit-text-stroke:0.25px #5b5f61;">747</span>
<span class="t" style="left:47.83px;top:736.50px;font-size:14.5px;color:#1f2226;letter-spacing:0.350px;-webkit-text-stroke:0.25px #1f2226;">buy</span>
<span class="t" style="left:177.31px;top:736.50px;font-size:14.5px;color:#5b5f61;letter-spacing:0.120px;-webkit-text-stroke:0.25px #5b5f61;">737</span>
<span class="t" style="left:48.83px;top:788.90px;font-size:14.5px;color:#1f2226;letter-spacing:0.350px;-webkit-text-stroke:0.25px #1f2226;">wear</span>
<span class="t" style="left:177.31px;top:788.90px;font-size:14.5px;color:#5b5f61;letter-spacing:0.120px;-webkit-text-stroke:0.25px #5b5f61;">586</span>
<span class="t" style="left:347.02px;top:316.00px;font-size:14.5px;color:#191b23;letter-spacing:0.467px;-webkit-text-stroke:0.25px #191b23;">Keyword</span>
<span class="t" style="left:572.33px;top:316.00px;font-size:14.5px;color:#191b23;letter-spacing:1.040px;-webkit-text-stroke:0.25px #191b23;">Intent</span>
<span class="t" style="left:681.62px;top:316.00px;font-size:14.5px;color:#191b23;letter-spacing:0.410px;-webkit-text-stroke:0.25px #191b23;">Volume</span>
<span class="t" style="left:786.52px;top:316.00px;font-size:14.5px;color:#191b23;letter-spacing:0.168px;-webkit-text-stroke:0.25px #191b23;">Trend</span>
<span class="t" style="left:858.52px;top:316.00px;font-size:14.5px;color:#191b23;letter-spacing:-0.240px;-webkit-text-stroke:0.25px #191b23;">KD %</span>
<span class="t" style="left:951.62px;top:316.00px;font-size:14.5px;color:#191b23;letter-spacing:-0.667px;-webkit-text-stroke:0.25px #191b23;">CPC (USD)</span>
<span class="t" style="left:1073.83px;top:316.00px;font-size:14.5px;color:#191b23;letter-spacing:0.045px;-webkit-text-stroke:0.25px #191b23;">Com.</span>
<span class="t" style="left:1158.62px;top:316.50px;font-size:13.3px;color:#191b23;letter-spacing:-1.419px;-webkit-text-stroke:0.25px #191b23;">SF</span>
<span class="t" style="left:1272.92px;top:316.00px;font-size:14.5px;color:#191b23;letter-spacing:0.258px;-webkit-text-stroke:0.25px #191b23;">Results</span>
<span class="t" style="left:1425.72px;top:316.00px;font-size:14.5px;color:#191b23;letter-spacing:0.262px;-webkit-text-stroke:0.25px #191b23;">Last Update</span>
<span class="t" style="left:382.60px;top:373.00px;font-size:17.3px;color:#0062b8;letter-spacing:0.444px;-webkit-text-stroke:0.25px #0062b8;">how to pick the</span>
<span class="t" style="left:382.60px;top:397.80px;font-size:17.3px;color:#0062b8;letter-spacing:0.618px;-webkit-text-stroke:0.25px #0062b8;">right running</span>
<span class="t" style="left:382.60px;top:422.80px;font-size:17.3px;color:#0062b8;letter-spacing:-0.300px;-webkit-text-stroke:0.25px #0062b8;">shoes</span>
<span class="t" style="left:579.57px;top:374.80px;font-size:12.3px;color:#0b62bd;font-weight:700;-webkit-text-stroke:0.35px #0b62bd;">I</span>
<span class="t" style="left:709.83px;top:373.00px;font-size:17.3px;color:#1f2226;letter-spacing:-0.046px;-webkit-text-stroke:0.25px #1f2226;">2,900</span>
<span class="t" style="left:876.52px;top:373.00px;font-size:17.3px;color:#1f2226;letter-spacing:-0.561px;-webkit-text-stroke:0.25px #1f2226;">65</span>
<span class="t" style="left:1007.42px;top:373.00px;font-size:17.3px;color:#1f2226;letter-spacing:-0.658px;-webkit-text-stroke:0.25px #1f2226;">0.64</span>
<span class="t" style="left:1094.62px;top:373.00px;font-size:17.3px;color:#1f2226;letter-spacing:-0.291px;-webkit-text-stroke:0.25px #1f2226;">0.52</span>
<span class="t" style="left:1188.72px;top:373.00px;font-size:17.3px;color:#595b5c;letter-spacing:-0.242px;-webkit-text-stroke:0.25px #595b5c;">+3</span>
<span class="t" style="left:1273.92px;top:373.00px;font-size:17.3px;color:#1f2226;letter-spacing:0.439px;-webkit-text-stroke:0.25px #1f2226;">369M</span>
<span class="t" style="left:1417.62px;top:373.00px;font-size:17.3px;color:#1f2226;letter-spacing:0.010px;-webkit-text-stroke:0.25px #1f2226;">Last week</span>
<span class="t" style="left:382.60px;top:480.00px;font-size:17.3px;color:#0062b8;letter-spacing:0.190px;-webkit-text-stroke:0.25px #0062b8;">are hokas running</span>
<span class="t" style="left:382.60px;top:504.80px;font-size:17.3px;color:#0062b8;letter-spacing:-0.300px;-webkit-text-stroke:0.25px #0062b8;">shoes</span>
<span class="t" style="left:577.90px;top:482.00px;font-size:12.6px;color:#a86f00;font-weight:700;">C</span>
<span class="t" style="left:709.83px;top:480.00px;font-size:17.3px;color:#1f2226;letter-spacing:-0.046px;-webkit-text-stroke:0.25px #1f2226;">2,400</span>
<span class="t" style="left:876.52px;top:480.00px;font-size:17.3px;color:#1f2226;letter-spacing:-0.561px;-webkit-text-stroke:0.25px #1f2226;">58</span>
<span class="t" style="left:1007.42px;top:480.00px;font-size:17.3px;color:#1f2226;letter-spacing:-0.324px;-webkit-text-stroke:0.25px #1f2226;">0.00</span>
<span class="t" style="left:1094.62px;top:480.00px;font-size:17.3px;color:#1f2226;letter-spacing:-0.291px;-webkit-text-stroke:0.25px #1f2226;">0.00</span>
<span class="t" style="left:1188.72px;top:480.00px;font-size:17.3px;color:#595b5c;letter-spacing:-1.242px;-webkit-text-stroke:0.25px #595b5c;">+4</span>
<span class="t" style="left:1268.62px;top:480.00px;font-size:17.3px;color:#1f2226;letter-spacing:0.454px;-webkit-text-stroke:0.25px #1f2226;">19.2M</span>
<span class="t" style="left:1400.33px;top:480.00px;font-size:17.3px;color:#1f2226;letter-spacing:-0.087px;-webkit-text-stroke:0.25px #1f2226;">2 weeks ago</span>
<span class="t" style="left:382.60px;top:562.00px;font-size:17.3px;color:#0062b8;letter-spacing:0.419px;-webkit-text-stroke:0.25px #0062b8;">how long do</span>
<span class="t" style="left:382.60px;top:586.80px;font-size:17.3px;color:#0062b8;letter-spacing:0.129px;-webkit-text-stroke:0.25px #0062b8;">running shoes</span>
<span class="t" style="left:382.60px;top:611.80px;font-size:17.3px;color:#0062b8;letter-spacing:0.395px;-webkit-text-stroke:0.25px #0062b8;">last</span>
<span class="t" style="left:579.57px;top:563.80px;font-size:12.3px;color:#0b62bd;font-weight:700;-webkit-text-stroke:0.35px #0b62bd;">I</span>
<span class="t" style="left:708.83px;top:562.00px;font-size:17.3px;color:#1f2226;letter-spacing:0.204px;-webkit-text-stroke:0.25px #1f2226;">1,600</span>
<span class="t" style="left:876.52px;top:562.00px;font-size:17.3px;color:#1f2226;letter-spacing:-1.561px;-webkit-text-stroke:0.25px #1f2226;">54</span>
<span class="t" style="left:1007.42px;top:562.00px;font-size:17.3px;color:#1f2226;letter-spacing:-0.324px;-webkit-text-stroke:0.25px #1f2226;">0.78</span>
<span class="t" style="left:1094.62px;top:562.00px;font-size:17.3px;color:#1f2226;letter-spacing:-0.291px;-webkit-text-stroke:0.25px #1f2226;">0.09</span>
<span class="t" style="left:1188.72px;top:562.00px;font-size:17.3px;color:#595b5c;letter-spacing:-0.242px;-webkit-text-stroke:0.25px #595b5c;">+2</span>
<span class="t" style="left:1333.58px;top:562.00px;font-size:17.3px;color:#1f2226;-webkit-text-stroke:0.25px #1f2226;">0</span>
<span class="t" style="left:1417.62px;top:562.00px;font-size:17.3px;color:#1f2226;letter-spacing:0.010px;-webkit-text-stroke:0.25px #1f2226;">Last week</span>
<span class="t" style="left:382.60px;top:669.00px;font-size:17.3px;color:#0062b8;letter-spacing:0.406px;-webkit-text-stroke:0.25px #0062b8;">how should running</span>
<span class="t" style="left:382.60px;top:693.80px;font-size:17.3px;color:#0062b8;letter-spacing:0.402px;-webkit-text-stroke:0.25px #0062b8;">shoes fit</span>
<span class="t" style="left:579.57px;top:670.80px;font-size:12.3px;color:#0b62bd;font-weight:700;-webkit-text-stroke:0.35px #0b62bd;">I</span>
<span class="t" style="left:708.83px;top:669.00px;font-size:17.3px;color:#1f2226;letter-spacing:0.204px;-webkit-text-stroke:0.25px #1f2226;">1,600</span>
<span class="t" style="left:876.52px;top:669.00px;font-size:17.3px;color:#1f2226;letter-spacing:-0.561px;-webkit-text-stroke:0.25px #1f2226;">55</span>
<span class="t" style="left:1007.42px;top:669.00px;font-size:17.3px;color:#1f2226;letter-spacing:-0.324px;-webkit-text-stroke:0.25px #1f2226;">0.85</span>
<span class="t" style="left:1094.62px;top:669.00px;font-size:17.3px;color:#1f2226;letter-spacing:-0.291px;-webkit-text-stroke:0.25px #1f2226;">0.26</span>
<span class="t" style="left:1188.72px;top:669.00px;font-size:17.3px;color:#595b5c;letter-spacing:-0.242px;-webkit-text-stroke:0.25px #595b5c;">+3</span>
<span class="t" style="left:1333.58px;top:669.00px;font-size:17.3px;color:#1f2226;-webkit-text-stroke:0.25px #1f2226;">0</span>
<span class="t" style="left:1417.62px;top:669.00px;font-size:17.3px;color:#1f2226;letter-spacing:0.010px;-webkit-text-stroke:0.25px #1f2226;">Last week</span>
<span class="t" style="left:382.60px;top:751.00px;font-size:17.3px;color:#0062b8;letter-spacing:0.377px;-webkit-text-stroke:0.25px #0062b8;">when to replace</span>
<span class="t" style="left:382.60px;top:775.80px;font-size:17.3px;color:#0062b8;letter-spacing:0.129px;-webkit-text-stroke:0.25px #0062b8;">running shoes</span>
<span class="t" style="left:579.57px;top:752.80px;font-size:12.3px;color:#0b62bd;font-weight:700;-webkit-text-stroke:0.35px #0b62bd;">I</span>
<span class="t" style="left:708.83px;top:751.00px;font-size:17.3px;color:#1f2226;letter-spacing:0.204px;-webkit-text-stroke:0.25px #1f2226;">1,600</span>
<span class="t" style="left:876.52px;top:751.00px;font-size:17.3px;color:#1f2226;letter-spacing:-0.561px;-webkit-text-stroke:0.25px #1f2226;">63</span>
<span class="t" style="left:1007.42px;top:751.00px;font-size:17.3px;color:#1f2226;letter-spacing:-0.324px;-webkit-text-stroke:0.25px #1f2226;">0.38</span>
<span class="t" style="left:1094.62px;top:751.00px;font-size:17.3px;color:#1f2226;letter-spacing:-0.291px;-webkit-text-stroke:0.25px #1f2226;">0.17</span>
<span class="t" style="left:1188.72px;top:751.00px;font-size:17.3px;color:#595b5c;letter-spacing:-0.242px;-webkit-text-stroke:0.25px #595b5c;">+3</span>
<span class="t" style="left:1269.62px;top:751.00px;font-size:17.3px;color:#1f2226;letter-spacing:0.204px;-webkit-text-stroke:0.25px #1f2226;">54.5M</span>
<span class="t" style="left:1400.33px;top:751.00px;font-size:17.3px;color:#1f2226;letter-spacing:-0.087px;-webkit-text-stroke:0.25px #1f2226;">2 weeks ago</span>
<div class="b" style="left:2px;top:116px;width:147px;height:66px;border:6px solid #ff2600;border-radius:23px;"></div>
<div class="b" style="left:0;top:792px;width:1567px;height:29px;background:linear-gradient(to bottom, rgba(0,0,0,0) 0%, rgba(0,0,0,0.03) 50%, rgba(0,0,0,0.095) 100%);"></div>
<div class="b" style="left:1480px;top:730px;width:75px;height:75px;border-radius:50%;background:#ff5b28;"></div>
<span class="t" style="left:1506.4px;top:737.6px;font-size:42px;line-height:60px;color:#fff;-webkit-text-stroke:0.7px #fff;">?</span>
</div>
</body></html>
